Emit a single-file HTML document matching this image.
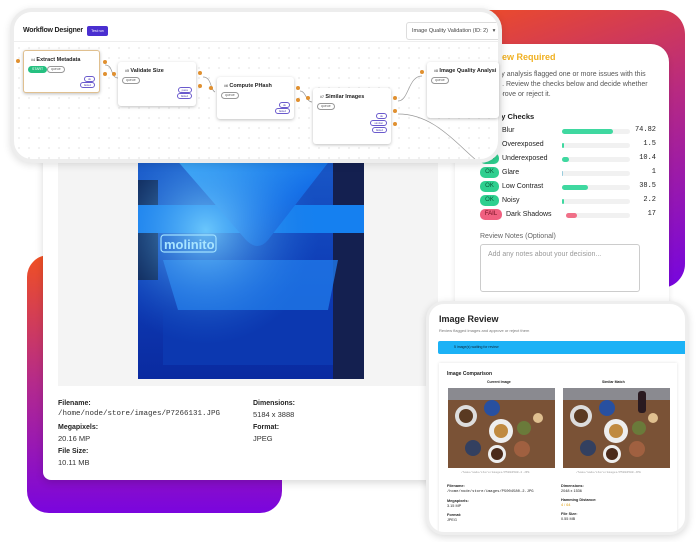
<!DOCTYPE html>
<html><head><meta charset="utf-8"><style>
*{box-sizing:border-box;margin:0;padding:0}
body{width:696px;height:542px;background:#fff;position:relative;overflow:hidden;font-family:"Liberation Sans",sans-serif;color:#222}
.abs{position:absolute}
.mono{font-family:"Liberation Mono",monospace}
.lbl{font-size:7px;font-weight:bold;color:#222}
.val{font-size:7.5px;color:#333}
.row{position:absolute;left:480px;height:12px;width:176px;font-size:7px}
.badge{position:absolute;left:0;top:0;width:19px;height:11px;border-radius:5px;background:#2fcf8f;color:#0a5a3a;font-size:6px;text-align:center;line-height:11px}
.row .t{position:absolute;left:22px;top:2px}
.row .tr{position:absolute;left:82px;top:4px;width:68px;height:5px;border-radius:3px;background:#f1f1f1}
.row .b{position:absolute;left:0;top:0;height:5px;border-radius:3px;background:#3fd8a0}
.row .v{position:absolute;right:0;top:1px;font-family:"Liberation Mono",monospace;font-size:7px}
.node{position:absolute;background:#fff;border-radius:3px;box-shadow:0 1px 3px rgba(0,0,0,.25);font-size:5px}
.node .h{position:absolute;left:7px;top:6px;font-weight:bold;font-size:5.5px}
.pill{position:absolute;border:1px solid #999;border-radius:5px;font-size:3.5px;color:#666;padding:0 3px;line-height:5px}
.op{position:absolute;right:4px;border:1px solid #6a5acd;border-radius:4px;font-size:3px;color:#5548b0;padding:0 3px;line-height:4px}
.dot{position:absolute;width:4px;height:4px;border-radius:2px;background:#e09030}
</style></head><body>

<div class="abs" style="left:27px;top:255px;width:255px;height:258px;border-radius:22px;background:linear-gradient(180deg,#f05022,#b42a8c 50%,#7a05de)"></div>
<div class="abs" style="left:440px;top:10px;width:245px;height:278px;border-radius:24px;background:linear-gradient(160deg,#f04e23,#b82a80 45%,#7505e0)"></div>

<div class="abs" style="left:43px;top:120px;width:420px;height:360px;background:#fff;border-radius:8px;box-shadow:0 3px 8px rgba(0,0,0,.15)"></div>
<div class="abs" style="left:58px;top:150px;width:380px;height:236px;background:#f4f4f4"></div>
<svg class="abs" style="left:138px;top:150px" width="226" height="229" viewBox="0 0 226 229">
<defs><linearGradient id="bg" x1="0" y1="0" x2="0" y2="1"><stop offset="0" stop-color="#1a5ac8"/><stop offset=".5" stop-color="#0f3fb8"/><stop offset="1" stop-color="#0a2aa0"/></linearGradient>
<linearGradient id="v" x1="0" y1="0" x2="1" y2="1"><stop offset="0" stop-color="#40b8ff"/><stop offset=".6" stop-color="#1570e8"/><stop offset="1" stop-color="#0d48c0"/></linearGradient>
<radialGradient id="gl" cx=".3" cy=".35" r=".5"><stop offset="0" stop-color="#7fd8ff" stop-opacity=".8"/><stop offset="1" stop-color="#1a70e0" stop-opacity="0"/></radialGradient></defs>
<rect width="226" height="229" fill="url(#bg)"/>
<rect x="195" y="0" width="31" height="229" fill="#142050"/>
<rect x="0" y="30" width="20" height="100" fill="#0a1840"/>
<rect x="0" y="55" width="226" height="28" fill="#1580f0"/>
<path d="M30 0 L200 0 L130 90 Q120 102 108 90 Z" fill="url(#v)"/>
<path d="M25 110 L200 110 L190 160 L40 160 Z" fill="#1f78e8" opacity=".8"/>
<rect x="25" y="160" width="170" height="55" fill="#0c38b0"/>
<rect width="226" height="229" fill="url(#gl)"/>
<rect x="23" y="85" width="55" height="17" rx="3" fill="none" stroke="#9fe0ff" stroke-width="1.2"/>
<text x="26" y="99" font-size="13" font-family="Liberation Sans" font-weight="bold" fill="#a8e4ff">molinito</text>
</svg>
<div class="abs lbl" style="left:58px;top:400px">Filename:</div>
<div class="abs val mono" style="left:58px;top:410px;font-size:7.5px">/home/node/store/images/P7266131.JPG</div>
<div class="abs lbl" style="left:58px;top:424px">Megapixels:</div>
<div class="abs val" style="left:58px;top:434px">20.16 MP</div>
<div class="abs lbl" style="left:58px;top:448px">File Size:</div>
<div class="abs val" style="left:58px;top:458px">10.11 MB</div>
<div class="abs lbl" style="left:253px;top:400px">Dimensions:</div>
<div class="abs val" style="left:253px;top:410px">5184 x 3888</div>
<div class="abs lbl" style="left:253px;top:424px">Format:</div>
<div class="abs val" style="left:253px;top:434px">JPEG</div>

<div class="abs" style="left:455px;top:44px;width:214px;height:270px;background:#fff;border-radius:0 18px 0 0;box-shadow:0 2px 6px rgba(0,0,0,.1)"></div>
<div class="abs" style="left:483px;top:52px;font-size:9px;font-weight:bold;color:#f0b020">Review Required</div>
<div class="abs" style="left:483px;top:70px;width:165px;font-size:7px;line-height:10px;color:#555">Quality analysis flagged one or more issues with this image. Review the checks below and decide whether to approve or reject it.</div>
<div class="abs" style="left:480px;top:112px;font-size:7.5px;font-weight:bold">Quality Checks</div>
<div class="row" style="top:125px"><div class="badge">OK</div><div class="t">Blur</div><div class="tr"><div class="b" style="width:51px"></div></div><div class="v">74.82</div></div>
<div class="row" style="top:139px"><div class="badge">OK</div><div class="t">Overexposed</div><div class="tr"><div class="b" style="width:1.5px"></div></div><div class="v">1.5</div></div>
<div class="row" style="top:153px"><div class="badge">OK</div><div class="t">Underexposed</div><div class="tr"><div class="b" style="width:7px"></div></div><div class="v">10.4</div></div>
<div class="row" style="top:167px"><div class="badge">OK</div><div class="t">Glare</div><div class="tr"><div class="b" style="width:1px;background:#9cd"></div></div><div class="v">1</div></div>
<div class="row" style="top:181px"><div class="badge">OK</div><div class="t">Low Contrast</div><div class="tr"><div class="b" style="width:26px"></div></div><div class="v">38.5</div></div>
<div class="row" style="top:195px"><div class="badge">OK</div><div class="t">Noisy</div><div class="tr"><div class="b" style="width:1.5px"></div></div><div class="v">2.2</div></div>
<div class="row" style="top:209px"><div class="badge" style="width:22px;background:#f06080;color:#701020">FAIL</div><div class="t" style="left:26px">Dark Shadows</div><div class="tr" style="left:86px;width:64px"><div class="b" style="width:11px;background:#f07088"></div></div><div class="v">17</div></div>
<div class="abs" style="left:480px;top:233px;font-size:7px;color:#666">Review Notes (Optional)</div>
<div class="abs" style="left:480px;top:244px;width:160px;height:48px;border:1px solid #ccc;border-radius:3px;font-size:7px;color:#999;padding:6px 7px">Add any notes about your decision...</div>

<div class="abs" style="left:10px;top:8px;width:492px;height:155px;border-radius:22px;background:#fff;border:4px solid #ededed;box-shadow:0 2px 8px rgba(0,0,0,.12);overflow:hidden">
 <div class="abs" style="left:0;top:0;right:0;height:30px;border-bottom:1px solid #eee;background:#fff"></div>
 <div class="abs" style="left:9px;top:15px;font-size:7px;font-weight:bold;letter-spacing:-.2px;white-space:nowrap">Workflow Designer</div>
 <div class="abs" style="left:73px;top:14px;width:21px;height:10px;background:#4a2fd0;border-radius:2px;color:#fff;font-size:3.5px;text-align:center;line-height:10px">Test run</div>
 <div class="abs" style="left:392px;top:10px;width:100px;height:18px;border:1px solid #ddd;border-radius:3px;font-size:5.5px;color:#444;padding:5px 5px">Image Quality Validation (ID: 2) &nbsp;&nbsp;▾</div>
 <div class="abs" style="left:0;top:31px;right:0;bottom:0;background-image:radial-gradient(#ccc .6px,transparent .8px);background-size:10px 10px"></div>
 <svg class="abs" style="left:0;top:0" width="492" height="155" fill="none" stroke="#999" stroke-width=".7">
  <path d="M91 53 C100 53,96 66,104 66"/><path d="M189 65 C198 65,196 78,201 80"/><path d="M286 79 C292 79,292 90,298 90"/><path d="M384 89 C395 89,394 64,408 64"/><path d="M384 102 C420 102,440 130,470 155"/>
 </svg>
</div>
<div class="node" style="left:23px;top:50px;width:77px;height:43px;border:1px solid #e0c090"><div class="h"><span style="font-size:3.5px;color:#666">#4</span> Extract Metadata</div><div class="pill" style="left:4px;top:15px;background:#25c080;border-color:#25c080;color:#fff">START</div><div class="pill" style="left:23px;top:15px">queue</div><div class="op" style="top:25px">ok</div><div class="op" style="top:31px">failed</div></div>
<div class="node" style="left:118px;top:62px;width:78px;height:44px"><div class="h"><span style="font-size:3.5px;color:#666">#5</span> Validate Size</div><div class="pill" style="left:4px;top:15px">queue</div><div class="op" style="top:25px">pass</div><div class="op" style="top:31px">failed</div></div>
<div class="node" style="left:217px;top:77px;width:77px;height:42px"><div class="h"><span style="font-size:3.5px;color:#666">#6</span> Compute PHash</div><div class="pill" style="left:4px;top:15px">queue</div><div class="op" style="top:25px">ok</div><div class="op" style="top:31px">failed</div></div>
<div class="node" style="left:313px;top:88px;width:78px;height:56px"><div class="h"><span style="font-size:3.5px;color:#666">#7</span> Similar Images</div><div class="pill" style="left:4px;top:15px">queue</div><div class="op" style="top:25px">ok</div><div class="op" style="top:32px">similar</div><div class="op" style="top:39px">failed</div></div>
<div class="node" style="left:427px;top:62px;width:72px;height:56px"><div class="h"><span style="font-size:3.5px;color:#666">#8</span> Image Quality Analysi</div><div class="pill" style="left:4px;top:15px">queue</div></div>
<div class="dot" style="left:16px;top:59px"></div>
<div class="dot" style="left:103px;top:60px"></div><div class="dot" style="left:103px;top:72px"></div><div class="dot" style="left:112px;top:72px"></div>
<div class="dot" style="left:198px;top:71px"></div><div class="dot" style="left:198px;top:84px"></div><div class="dot" style="left:209px;top:86px"></div>
<div class="dot" style="left:296px;top:86px"></div><div class="dot" style="left:296px;top:98px"></div><div class="dot" style="left:306px;top:96px"></div>
<div class="dot" style="left:393px;top:96px"></div><div class="dot" style="left:393px;top:109px"></div><div class="dot" style="left:393px;top:122px"></div><div class="dot" style="left:420px;top:70px"></div>

<div class="abs" style="left:426px;top:301px;width:262px;height:234px;border-radius:18px;background:#fff;border:3px solid #eee;box-shadow:0 2px 8px rgba(0,0,0,.15);overflow:hidden">
 <div class="abs" style="left:10px;top:10px;font-size:9px;font-weight:bold">Image Review</div>
 <div class="abs" style="left:10px;top:24px;font-size:4px;color:#777">Review flagged images and approve or reject them</div>
 <div class="abs" style="left:9px;top:37px;width:260px;height:13px;background:#1cb2f6;border-radius:2px;font-size:3.5px;color:#123;padding:4px 16px">5 image(s) waiting for review</div>
 <div class="abs" style="left:10px;top:59px;width:238px;height:175px;box-shadow:0 0 3px rgba(0,0,0,.12)">
  <div class="abs" style="left:8px;top:8px;font-size:5px;font-weight:bold">Image Comparison</div>
  <div class="abs" style="left:48px;top:17px;font-size:3.5px;font-weight:bold">Current Image</div>
  <div class="abs" style="left:163px;top:17px;font-size:3.5px;font-weight:bold">Similar Match</div>
  <svg class="abs" style="left:9px;top:25px" width="107" height="80" viewBox="0 0 107 80"><rect width="107" height="80" fill="#7a5236"/><rect width="107" height="12" fill="#8a8a90"/><circle cx="18" cy="28" r="11" fill="#ddd"/><circle cx="18" cy="28" r="7" fill="#5a3a22"/><circle cx="44" cy="20" r="8" fill="#2850a0"/><circle cx="53" cy="43" r="12" fill="#eee"/><circle cx="53" cy="43" r="7" fill="#c08a40"/><circle cx="76" cy="40" r="7" fill="#6a7a3a"/><circle cx="25" cy="60" r="8" fill="#334060"/><circle cx="49" cy="66" r="9" fill="#eee"/><circle cx="49" cy="66" r="6" fill="#4a2a1a"/><circle cx="74" cy="61" r="8" fill="#a06040"/><circle cx="90" cy="30" r="5" fill="#e0c090"/></svg>
  <svg class="abs" style="left:124px;top:25px" width="107" height="80" viewBox="0 0 107 80"><rect width="107" height="80" fill="#7a5236"/><rect width="107" height="12" fill="#8a8a90"/><rect x="75" y="3" width="8" height="22" rx="3" fill="#2a1a20"/><circle cx="18" cy="28" r="11" fill="#ddd"/><circle cx="18" cy="28" r="7" fill="#5a3a22"/><circle cx="44" cy="20" r="8" fill="#2850a0"/><circle cx="53" cy="43" r="12" fill="#eee"/><circle cx="53" cy="43" r="7" fill="#c08a40"/><circle cx="76" cy="40" r="7" fill="#6a7a3a"/><circle cx="25" cy="60" r="8" fill="#334060"/><circle cx="49" cy="66" r="9" fill="#eee"/><circle cx="49" cy="66" r="6" fill="#4a2a1a"/><circle cx="74" cy="61" r="8" fill="#a06040"/><circle cx="90" cy="30" r="5" fill="#e0c090"/></svg>
  <div class="abs mono" style="left:22px;top:108px;font-size:3px;color:#999">/home/node/store/images/P5004580-2.JPG</div>
  <div class="abs mono" style="left:137px;top:108px;font-size:3px;color:#999">/home/node/store/images/P5004580.JPG</div>
  <div class="abs" style="left:8px;top:121px;font-size:3.8px;line-height:5px"><b>Filename:</b><br><span class="mono">/home/node/store/images/P5004580-2.JPG</span><br><div style="height:4px"></div><b>Megapixels:</b><br>3.15 MP<br><div style="height:4px"></div><b>Format:</b><br>JPEG</div>
  <div class="abs" style="left:122px;top:121px;font-size:3.8px;line-height:5px"><b>Dimensions:</b><br>2048 x 1536<br><div style="height:4px"></div><b>Hamming Distance:</b><br><span style="color:#e0a010">4 / 64</span><br><div style="height:4px"></div><b>File Size:</b><br>0.55 MB</div>
 </div>
</div>
</body></html>
